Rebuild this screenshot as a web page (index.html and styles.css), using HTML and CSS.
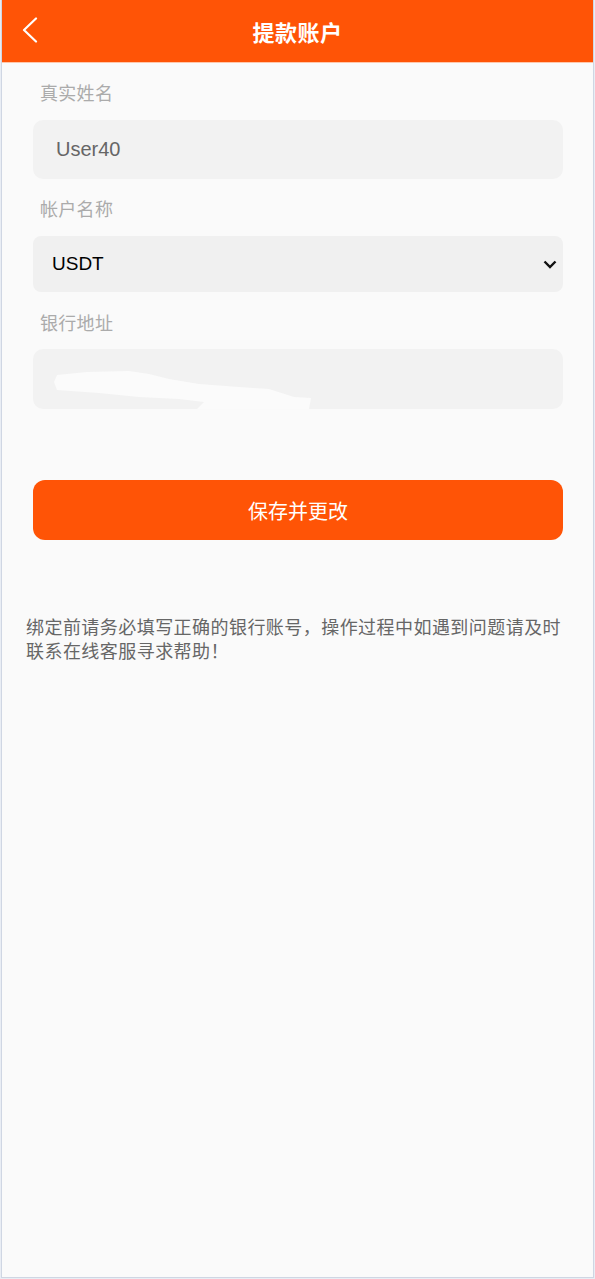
FILE: index.html
```html
<!DOCTYPE html>
<html lang="zh-CN">
<head>
<meta charset="utf-8">
<title>提款账户</title>
<link rel="stylesheet" href="styles.css">
</head>
<body>
<div class="app">
  <header class="topbar">
    <span class="back">
      <svg width="16" height="26" viewBox="0 0 16 26"><polyline points="14,1.5 2,13 14,24.5" fill="none" stroke="#fff" stroke-width="2.2" stroke-linecap="round" stroke-linejoin="round"/></svg>
    </span>
    <h1 class="title">提款账户</h1>
  </header>
  <main class="form">
    <div class="label first">真实姓名</div>
    <div class="field f-name">User40</div>
    <div class="label second">帐户名称</div>
    <div class="field f-select">
      <span>USDT</span>
      <svg width="14" height="9" viewBox="0 0 14 9"><polyline points="1.5,1.5 7,7 12.5,1.5" fill="none" stroke="#111" stroke-width="2.4" stroke-linejoin="miter"/></svg>
    </div>
    <div class="label third">银行地址</div>
    <div class="field f-addr">
      <svg width="290" height="60" viewBox="0 0 290 60"><polygon points="24,26 54,23 96,22 116,25 136,30 166,35 206,38 236,40 261,48 278,49 276,60 164,60 171,53 146,50 106,48 66,44 24,41 21,33" fill="#fbfbfb"/></svg>
    </div>
    <button class="save">保存并更改</button>
  </main>
  <p class="note">绑定前请务必填写正确的银行账号，操作过程中如遇到问题请及时联系在线客服寻求帮助！</p>
</div>
</body>
</html>
```
FILE: styles.css
```css
html, body {
  margin: 0;
  padding: 0;
}
body {
  background: #e9edf4;
  font-family: "Liberation Sans", "Noto Sans CJK SC", sans-serif;
}
.app {
  margin: 0 1px 1px 1px;
  border: 1px solid #cfd6e3;
  border-top: none;
  background: #fafafa;
  box-sizing: border-box;
  height: 1278px;
}
.topbar {
  height: 62px;
  background: #ff5406;
  border-bottom: 1px solid #ffc7ab;
  display: flex;
  align-items: center;
  justify-content: center;
  position: relative;
}
.back {
  position: absolute;
  left: 20px;
  top: 17px;
  display: flex;
}
.title {
  margin: 0;
  color: #fff;
  font-size: 22px;
  font-weight: bold;
  font-family: "Noto Sans CJK SC", sans-serif;
  letter-spacing: 0.5px;
}
.form {
  padding: 17px 30px 0 31px;
  display: flex;
  flex-direction: column;
}
.label {
  font-family: "Noto Sans CJK SC", sans-serif;
  font-size: 18px;
  line-height: 24px;
  color: #ababab;
  padding-left: 7px;
  letter-spacing: 0.3px;
}
.second { margin-top: 17px; }
.third { margin-top: 18px; }
.field {
  background: #f2f2f2;
  border-radius: 10px;
  display: flex;
  align-items: center;
  box-sizing: border-box;
}
.f-name {
  margin-top: 16px;
  height: 59px;
  padding-left: 23px;
  font-size: 20px;
  color: #666;
}
.f-select {
  margin-top: 16px;
  height: 56px;
  background: #f0f0f0;
  padding: 0 6px 0 19px;
  justify-content: space-between;
  font-size: 19px;
  color: #000;
  border-radius: 8px;
}
.f-addr {
  margin-top: 15px;
  height: 60px;
  overflow: hidden;
}
.f-addr svg {
  display: block;
}
.save {
  margin-top: 71px;
  height: 60px;
  border: none;
  border-radius: 12px;
  background: #ff5406;
  color: #fff;
  font-family: "Noto Sans CJK SC", sans-serif;
  font-size: 20px;
  padding: 0;
}
.note {
  margin: 74px 27px 0 24px;
  font-family: "Noto Sans CJK SC", sans-serif;
  font-size: 18px;
  line-height: 24px;
  letter-spacing: 0.45px;
  color: #666;
}
```
